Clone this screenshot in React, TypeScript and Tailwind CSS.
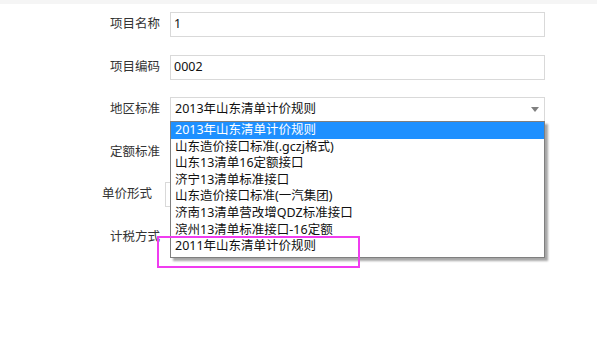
import React from "react";

const font = { fontFamily: '"Noto Sans", "Noto Sans CJK SC", sans-serif' };

const options = [
  "2013年山东清单计价规则",
  "山东造价接口标准(.gczj格式)",
  "山东13清单16定额接口",
  "济宁13清单标准接口",
  "山东造价接口标准(一汽集团)",
  "济南13清单营改增QDZ标准接口",
  "滨州13清单标准接口-16定额",
  "2011年山东清单计价规则",
];

function Row({ label, value, labelW = "w-[160px]", gap = "ml-[10px]" }: { label: string; value: string; labelW?: string; gap?: string }) {
  return (
    <div className="flex h-[25px] items-center">
      <div className={`${labelW} shrink-0 text-right text-[12.5px] text-[#333]`}>{label}</div>
      <div className={`${gap} flex h-[25px] w-[375px] items-center border border-[#d9d9d9] bg-white px-[3px] text-[12.5px] text-[#111]`}>
        {value}
      </div>
    </div>
  );
}

export default function App() {
  return (
    <div className="relative h-[360px] w-[597px] overflow-hidden bg-white" style={font}>
      <div className="h-[4px] bg-[#f5f5f5]" />
      <div className="flex flex-col gap-[17.5px] pt-[8px]">
        <Row label="项目名称" value="1" />
        <Row label="项目编码" value="0002" />
        <div className="flex h-[25px] items-center">
          <div className="w-[160px] shrink-0 text-right text-[12.5px] text-[#333]">地区标准</div>
          <div className="ml-[10px] flex h-[25px] w-[375px] items-center justify-between border border-[#d9d9d9] bg-white pl-[4px] pr-[5px] text-[12.5px] text-[#111]">
            <span>2013年山东清单计价规则</span>
            <svg width="8" height="5" viewBox="0 0 8 5">
              <path d="M0 0 H8 L4 5 Z" fill="#808080" />
            </svg>
          </div>
        </div>
        <Row label="定额标准" value="" />
        <Row label="单价形式" value="" labelW="w-[152px]" gap="ml-[13px]" />
        <Row label="计税方式" value="" />
      </div>

      {/* open dropdown list */}
      <div className="absolute left-[170px] top-[121px] w-[375px] border border-[#7f7f7f] bg-white pb-[2px] text-[12.5px] text-[#111] shadow-[3px_3px_2px_rgba(0,0,0,0.35)]">
        {options.map((o, i) => (
          <div
            key={o}
            className={
              i === 0
                ? "h-[16.6px] overflow-hidden bg-[#1e90ff] pl-[4px] leading-[16.6px] text-white"
                : "h-[16.6px] overflow-hidden pl-[4px] leading-[16.6px]"
            }
          >
            {o}
          </div>
        ))}
      </div>

      {/* highlight box */}
      <div className="absolute left-[157px] top-[236px] h-[32px] w-[203px] border-2 border-[#f03cf0]" />
    </div>
  );
}
